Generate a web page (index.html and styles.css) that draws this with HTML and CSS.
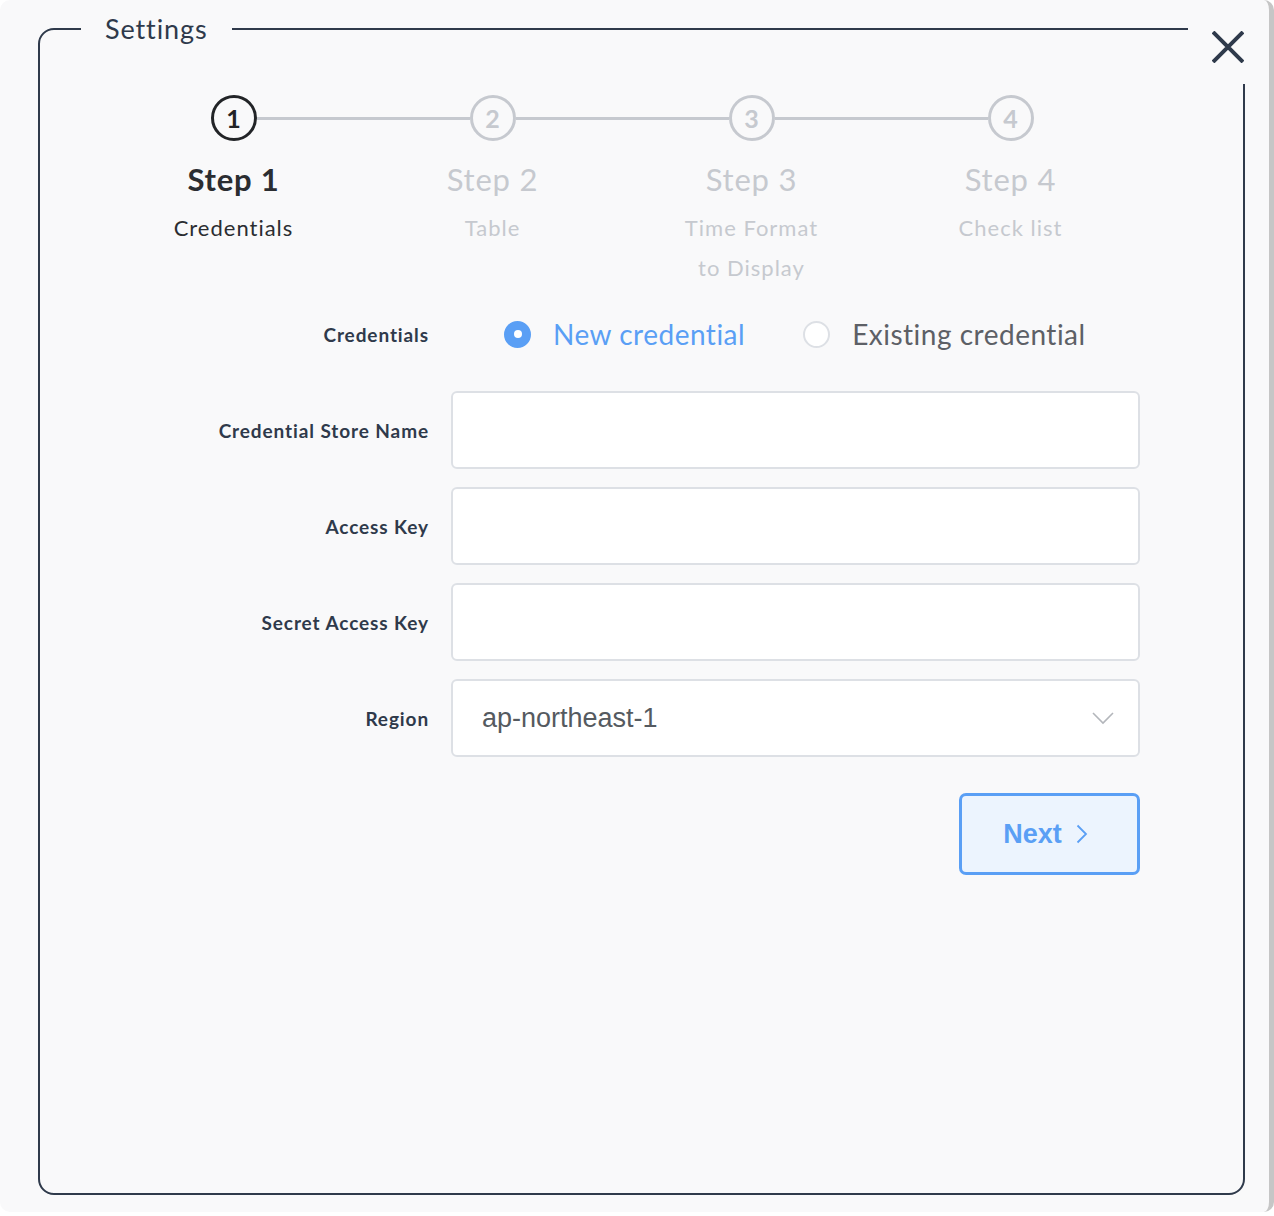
FILE: index.html
```html
<!DOCTYPE html>
<html lang="en">
<head>
<meta charset="utf-8">
<title>Settings</title>
<link rel="stylesheet" href="styles.css">
</head>
<body>
<div class="modal">
  <button class="close" type="button" aria-label="Close">
    <svg width="32" height="32" viewBox="0 0 32 32" aria-hidden="true"><path d="M1 1 L31 31 M31 1 L1 31" stroke="#2f3a4b" stroke-width="4" fill="none"/></svg>
  </button>
  <fieldset class="panel">
    <legend class="panel-title">Settings</legend>
    <div class="stepper">
      <div class="track">
        <span class="dot active">1</span><span class="line"></span>
        <span class="dot">2</span><span class="line"></span>
        <span class="dot">3</span><span class="line"></span>
        <span class="dot">4</span>
      </div>
      <div class="steps">
        <div class="step active"><div class="step-title">Step 1</div><div class="step-sub">Credentials</div></div>
        <div class="step"><div class="step-title">Step 2</div><div class="step-sub">Table</div></div>
        <div class="step"><div class="step-title">Step 3</div><div class="step-sub">Time Format<br>to Display</div></div>
        <div class="step"><div class="step-title">Step 4</div><div class="step-sub">Check list</div></div>
      </div>
    </div>
    <form class="form">
      <div class="row radio-row">
        <span class="label">Credentials</span>
        <div class="radios">
          <label class="radio checked"><span class="radio-dot"></span>New credential</label>
          <label class="radio"><span class="radio-dot"></span>Existing credential</label>
        </div>
      </div>
      <div class="row"><label class="label">Credential Store Name</label><input class="input" type="text"></div>
      <div class="row"><label class="label">Access Key</label><input class="input" type="text"></div>
      <div class="row"><label class="label">Secret Access Key</label><input class="input" type="text"></div>
      <div class="row">
        <label class="label">Region</label>
        <div class="select"><span>ap-northeast-1</span>
          <svg width="22" height="13" viewBox="0 0 22 13" aria-hidden="true"><path d="M1 1 L11 11 L21 1" stroke="#b3b6bb" stroke-width="1.6" fill="none"/></svg>
        </div>
      </div>
      <div class="actions">
        <button class="next" type="button">Next
          <svg width="12" height="20" viewBox="0 0 12 20" aria-hidden="true"><path d="M1.5 1.5 L10 10 L1.5 18.5" stroke="#5a9ff5" stroke-width="1.8" fill="none"/></svg>
        </button>
      </div>
    </form>
  </fieldset>
</div>
</body>
</html>
```

FILE: styles.css
```css
* { box-sizing: border-box; }
html, body { margin: 0; padding: 0; }
body {
  background: #ffffff;
  font-family: Lato, "Noto Sans", sans-serif;
  color: #2f3a4b;
}
.modal {
  position: relative;
  width: 1274px;
  height: 1212px;
  background: #f9f9fa;
  border-right: 5px solid #c6c6c6;
  border-radius: 10px;
  padding: 14px 0 0 38px;
}
.close {
  position: absolute;
  left: 1188px;
  top: 10px;
  width: 80px;
  height: 74px;
  background: #f9f9fa;
  border: none;
  padding: 0;
  display: flex;
  align-items: center;
  justify-content: center;
}
.panel {
  margin: 0;
  width: 1207px;
  height: 1181px;
  border: 2px solid #2f3a4b;
  border-radius: 16px;
  padding: 51px 103px 0 64px;
}
.panel-title {
  margin-left: -23px;
  padding: 0 24px;
  font-size: 27px;
  line-height: 30px;
  letter-spacing: 0.9px;
  font-weight: 400;
  color: #2f3a4b;
}
.track {
  display: flex;
  align-items: center;
  padding: 0 106.5px;
}
.dot {
  width: 46px;
  height: 46px;
  flex: none;
  border: 3px solid #c6c9cf;
  border-radius: 50%;
  display: flex;
  align-items: center;
  justify-content: center;
  font-size: 25px;
  font-weight: 700;
  color: #c6c9cf;
}
.dot.active { border-color: #222427; color: #222427; }
.line { flex: 1; height: 3px; background: #c6c9cf; }
.steps {
  display: grid;
  grid-template-columns: repeat(4, 1fr);
  text-align: center;
}
.step-title {
  margin-top: 18px;
  font-size: 31px;
  line-height: 40px;
  letter-spacing: 0.8px;
  color: #c6c9cf;
}
.step-sub {
  margin-top: 9px;
  font-size: 22px;
  line-height: 40px;
  letter-spacing: 1px;
  color: #c6c9cf;
}
.step.active .step-title { font-weight: 700; color: #2b2d31; }
.step.active .step-sub { color: #2b2d31; }
.form {
  margin-top: 26px;
  display: flex;
  flex-direction: column;
  gap: 18px;
}
.row {
  display: grid;
  grid-template-columns: 325px 1fr;
  column-gap: 22px;
  align-items: center;
}
.radio-row { min-height: 40px; margin-bottom: 19px; }
.label {
  text-align: right;
  font-size: 19px;
  font-weight: 700;
  letter-spacing: 0.9px;
  color: #2f3a4b;
}
.radios {
  display: flex;
  align-items: center;
  gap: 58px;
  padding-left: 53px;
}
.radio {
  display: flex;
  align-items: center;
  gap: 22px;
  font-size: 28px;
  letter-spacing: 0.5px;
  color: #5d6066;
}
.radio-dot {
  width: 27px;
  height: 27px;
  border-radius: 50%;
  border: 2px solid #dde0e5;
  background: #fff;
  display: flex;
  align-items: center;
  justify-content: center;
}
.radio.checked { color: #5a9ff5; }
.radio.checked .radio-dot { background: #5a9ff5; border-color: #5a9ff5; }
.radio.checked .radio-dot::after {
  content: "";
  width: 8px;
  height: 8px;
  border-radius: 50%;
  background: #fff;
}
.input, .select {
  width: 100%;
  height: 78px;
  border: 2px solid #dde0e5;
  border-radius: 6px;
  background: #fff;
}
.select {
  display: flex;
  align-items: center;
  justify-content: space-between;
  padding: 0 24px 0 29px;
  font-family: "Liberation Sans", Arial, sans-serif;
  font-size: 27px;
  color: #555a60;
}
.actions {
  display: flex;
  justify-content: flex-end;
  margin-top: 18px;
}
.next {
  width: 181px;
  height: 82px;
  border: 3px solid #5a9ff5;
  border-radius: 7px;
  background: #ecf4fe;
  color: #5a9ff5;
  font-family: "Liberation Sans", Arial, sans-serif;
  font-weight: 700;
  font-size: 27px;
  display: flex;
  align-items: center;
  justify-content: center;
  gap: 14px;
  padding: 0 8px 0 0;
}
```
